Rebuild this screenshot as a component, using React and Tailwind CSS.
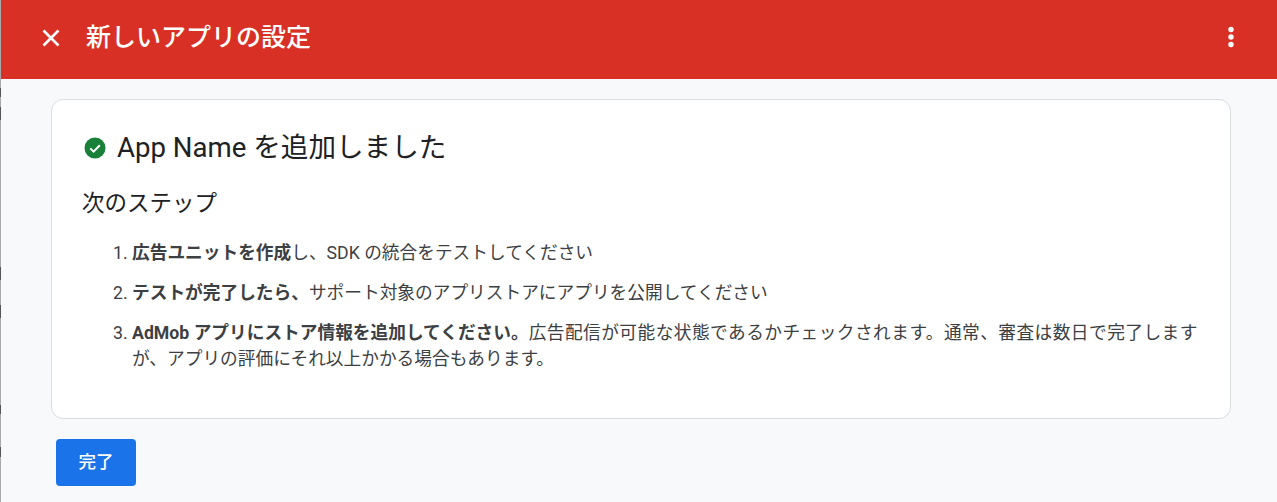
const font = "font-['Roboto','Noto_Sans_CJK_JP',sans-serif]";

// the window edge behind the page: a grey line with a few darker ticks
const edgeMarks = [
  { top: 88, h: 9 },
  { top: 10, h: 13 },
  { top: 147, h: 13 },
  { top: 25, h: 13 },
  { top: 87, h: 9 },
  { top: 33, h: 10 },
];

const Step = ({ num, children }) => {
  return (
    <li className="flex text-[17.7px] leading-[26px] text-[#3c4043]">
      <span className="w-[19px] shrink-0">{num}.</span>
      <span className="flex-1">{children}</span>
    </li>
  );
};

const App = () => {
  return (
    <div className={`${font} flex h-[502px] w-full bg-[#f8f9fa]`}>
      <div className="flex w-px shrink-0 flex-col bg-[#a8a8a8]">
        {edgeMarks.map((m, i) => (
          <div key={i} className="w-px bg-[#555555]" style={{ marginTop: m.top, height: m.h }} />
        ))}
      </div>
      <div className="flex min-w-0 flex-1 flex-col">
        <header className="flex h-[79px] shrink-0 items-center justify-between bg-[#d93025] pb-[3px] pl-[39px] pr-[43px] text-white">
          <div className="flex items-center gap-[24px]">
            <svg width="22" height="22" viewBox="0 0 22 22" fill="none" stroke="white" strokeWidth="2.6">
              <path d="M3.5 3.5 18.5 18.5M18.5 3.5 3.5 18.5" />
            </svg>
            <h1 className="text-[25px] font-medium leading-[32px]">新しいアプリの設定</h1>
          </div>
          <svg className="mb-[2px]" width="6" height="22" viewBox="0 0 6 22" fill="white">
            <circle cx="3" cy="3.5" r="2.7" />
            <circle cx="3" cy="11" r="2.7" />
            <circle cx="3" cy="18.5" r="2.7" />
          </svg>
        </header>

        <main className="flex flex-col items-start pl-[50px] pr-[46px] pt-[20px]">
          <section className="h-[320px] w-full rounded-[12px] border border-[#dadce0] bg-white pl-[30px] pr-[30px] pt-[30px]">
            <div className="flex items-center gap-[11px] pl-[2px]">
              <svg width="22" height="22" viewBox="0 0 22 22">
                <circle cx="11" cy="11" r="10.5" fill="#188038" />
                <path d="M6.3 11.4 9.6 14.6 15.8 8.2" fill="none" stroke="white" strokeWidth="2" />
              </svg>
              <h2 className="text-[27.6px] leading-[36px] text-[#202124]">App Name を追加しました</h2>
            </div>
            <h3 className="mt-[23px] text-[22.5px] leading-[28px] text-[#202124]">次のステップ</h3>
            <ol className="mt-[23px] flex flex-col gap-[14px] pl-[31px]">
              <Step num="1">
                <b className="font-bold">広告ユニットを作成</b>し、SDK の統合をテストしてください
              </Step>
              <Step num="2">
                <b className="font-bold">テストが完了したら、</b>サポート対象のアプリストアにアプリを公開してください
              </Step>
              <Step num="3">
                <b className="font-bold">AdMob アプリにストア情報を追加してください。</b>
                <span className="tracking-[0.45px]">広告配信が可能な状態であるかチェックされます。通常、審査は数日で完了します</span>が、アプリの評価にそれ以上かかる場合もあります。
              </Step>
            </ol>
          </section>
          <button className="ml-[5px] mt-[20px] h-[47px] w-[80px] rounded-[4px] bg-[#1a73e8] text-[17.6px] font-medium text-white">
            完了
          </button>
        </main>
      </div>
    </div>
  );
};

export default App;
